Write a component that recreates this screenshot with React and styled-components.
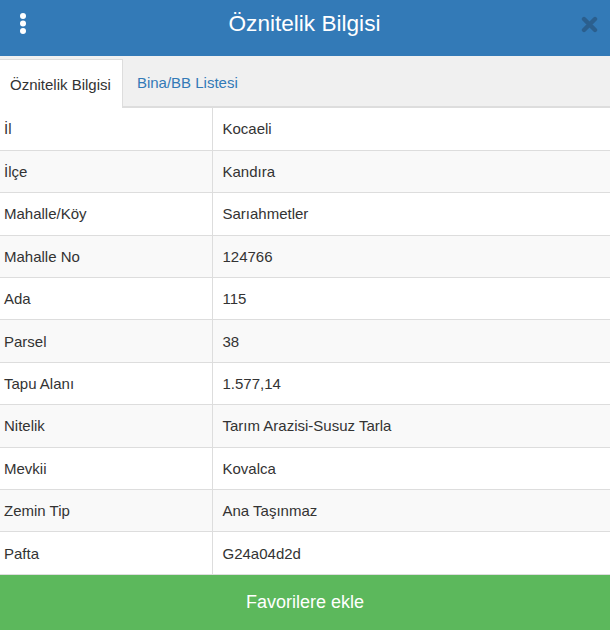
import React from 'react';
import styled, { createGlobalStyle } from 'styled-components';

const GlobalStyle = createGlobalStyle`
  html, body {
    margin: 0;
    padding: 0;
    background: #fff;
    font-family: "Liberation Sans", Arial, sans-serif;
    color: #333;
  }
`;

const Panel = styled.div`
  width: 610px;
  height: 630px;
  display: flex;
  flex-direction: column;
  overflow: hidden;
`;

const Header = styled.div`
  height: 56px;
  flex: none;
  background: #337ab7;
  display: flex;
  align-items: center;
  justify-content: space-between;
  padding: 0 11px 8px 13px;
  box-sizing: border-box;
`;

const Title = styled.h1`
  margin: 0;
  flex: 1;
  text-align: center;
  color: #fff;
  font-size: 22.6px;
  line-height: 26px;
  font-weight: normal;
  padding-right: 3px;
`;

const IconButton = styled.button`
  border: 0;
  background: none;
  padding: 0;
  width: 20px;
  height: 30px;
  display: flex;
  align-items: center;
  justify-content: center;
  cursor: pointer;
`;

const TabBar = styled.div`
  height: 52px;
  flex: none;
  background: #f0f0f0;
  border-bottom: 2px solid #ddd;
  box-sizing: border-box;
  display: flex;
  align-items: flex-end;
`;

const Tab = styled.div`
  height: ${p => (p.$active ? '49px' : '48px')};
  margin-bottom: ${p => (p.$active ? '-2px' : '0')};
  box-sizing: border-box;
  display: flex;
  align-items: center;
  font-size: 15px;
  padding: ${p => (p.$active ? '0 11px 0 10px' : '0 14px')};
  color: ${p => (p.$active ? '#333' : '#337ab7')};
  background: ${p => (p.$active ? '#fff' : 'transparent')};
  border: ${p => (p.$active ? '1px solid #ddd' : '0')};
  border-left: 0;
  border-bottom: 0;
  cursor: pointer;
`;

const Table = styled.table`
  width: 100%;
  border-collapse: collapse;
  font-size: 15px;
  flex: none;
`;

const Row = styled.tr`
  background: ${p => (p.$striped ? '#f9f9f9' : '#fff')};
  height: 42.4px;
  border-bottom: 1px solid #ddd;
`;

const KeyCell = styled.td`
  width: 212px;
  box-sizing: border-box;
  padding: 0 4px;
  border-right: 1px solid #ddd;
  vertical-align: middle;
`;

const ValueCell = styled.td`
  padding: 0 10px;
  vertical-align: middle;
`;

const Spacer = styled.div`
  flex: 1;
`;

const FavButton = styled.button`
  height: 56px;
  flex: none;
  width: 100%;
  border: 0;
  background: #5cb85c;
  color: #fff;
  font-family: "Liberation Sans", Arial, sans-serif;
  font-size: 18px;
  cursor: pointer;
`;

const rows = [
  ['İl', 'Kocaeli'],
  ['İlçe', 'Kandıra'],
  ['Mahalle/Köy', 'Sarıahmetler'],
  ['Mahalle No', '124766'],
  ['Ada', '115'],
  ['Parsel', '38'],
  ['Tapu Alanı', '1.577,14'],
  ['Nitelik', 'Tarım Arazisi-Susuz Tarla'],
  ['Mevkii', 'Kovalca'],
  ['Zemin Tip', 'Ana Taşınmaz'],
  ['Pafta', 'G24a04d2d'],
];

const Dots = () => (
  <svg width="8" height="24" viewBox="0 0 8 24">
    <circle cx="4" cy="4" r="3" fill="#fff" />
    <circle cx="4" cy="11.5" r="3" fill="#fff" />
    <circle cx="4" cy="19" r="3" fill="#fff" />
  </svg>
);

const CloseIcon = () => (
  <svg width="17" height="17" viewBox="0 0 17 17">
    <path
      d="M3 3 L14 14 M14 3 L3 14"
      stroke="#2b5f8e"
      strokeWidth="4.4"
      strokeLinecap="round"
    />
  </svg>
);

export default function App() {
  return (
    <>
      <GlobalStyle />
      <Panel>
        <Header>
          <IconButton aria-label="menu"><Dots /></IconButton>
          <Title>Öznitelik Bilgisi</Title>
          <IconButton aria-label="close"><CloseIcon /></IconButton>
        </Header>
        <TabBar>
          <Tab $active>Öznitelik Bilgisi</Tab>
          <Tab>Bina/BB Listesi</Tab>
        </TabBar>
        <Table>
          <tbody>
            {rows.map(([k, v], i) => (
              <Row key={k} $striped={i % 2 === 1}>
                <KeyCell>{k}</KeyCell>
                <ValueCell>{v}</ValueCell>
              </Row>
            ))}
          </tbody>
        </Table>
        <Spacer />
        <FavButton>Favorilere ekle</FavButton>
      </Panel>
    </>
  );
}
